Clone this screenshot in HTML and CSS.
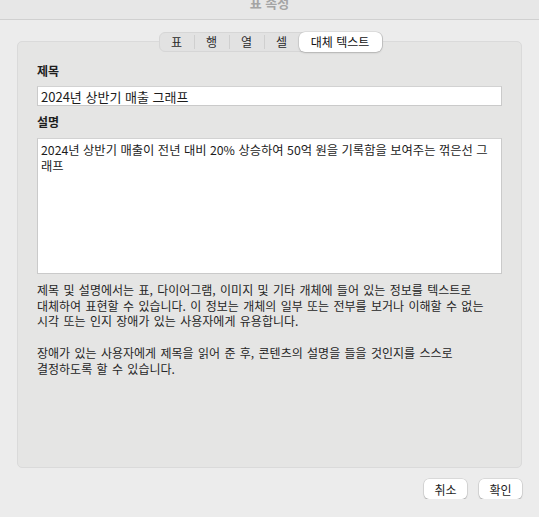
FILE: index.html
```html
<!DOCTYPE html>
<html lang="ko">
<head>
  <meta charset="utf-8">
  <title>표 속성</title>
  <link rel="stylesheet" href="styles.css">
</head>
<body>
  <div class="titlebar"><span class="title">표 속성</span></div>

  <div class="tabs-row">
    <div class="tabs">
      <span class="tab">표</span>
      <span class="tab">행</span>
      <span class="tab">열</span>
      <span class="tab">셀</span>
      <span class="tab active">대체 텍스트</span>
    </div>
  </div>

  <div class="panel">
    <label class="field-label" for="altTitle">제목</label>
    <input type="text" id="altTitle" class="field" value="2024년 상반기 매출 그래프">

    <label class="field-label second" for="altDesc">설명</label>
    <textarea id="altDesc" class="field area">2024년 상반기 매출이 전년 대비 20% 상승하여 50억 원을 기록함을 보여주는 꺾은선 그래프</textarea>

    <div class="help">
      <p>제목 및 설명에서는 표, 다이어그램, 이미지 및 기타 개체에 들어 있는 정보를 텍스트로<br>
      대체하여 표현할 수 있습니다. 이 정보는 개체의 일부 또는 전부를 보거나 이해할 수 없는<br>
      시각 또는 인지 장애가 있는 사용자에게 유용합니다.</p>
      <p>장애가 있는 사용자에게 제목을 읽어 준 후, 콘텐츠의 설명을 들을 것인지를 스스로<br>
      결정하도록 할 수 있습니다.</p>
    </div>
  </div>

  <div class="actions">
    <button class="btn">취소</button>
    <button class="btn">확인</button>
  </div>
</body>
</html>
```

FILE: styles.css
```css
body {
  margin: 0;
  background: #ececec;
  font-family: "Noto Sans CJK KR", sans-serif;
  color: #222;
  overflow: hidden;
}
.titlebar {
  height: 19px;
  background: #e7e7e7;
  border-bottom: 1px solid #d0d0d0;
  text-align: center;
}
.title {
  display: block;
  font-size: 13px;
  font-weight: 600;
  line-height: 6px;
  color: #a4a4a4;
}
.tabs-row {
  display: flex;
  justify-content: center;
  margin-top: 12px;
  margin-bottom: -11px;
  position: relative;
  z-index: 1;
}
.tabs {
  display: flex;
  align-items: center;
  height: 20px;
  margin-left: 2px;
  background: #e2e2e2;
  border: 1px solid #d6d6d6;
  border-radius: 6px;
  box-sizing: border-box;
}
.tab {
  width: 34px;
  text-align: center;
  font-size: 12px;
  line-height: 14px;
  color: #2a2a2a;
  border-left: 1px solid #cfcfcf;
}
.tab:first-child {
  border-left: none;
}
.tab.active {
  width: 83px;
  height: 20px;
  line-height: 20px;
  background: #fff;
  border-left: none;
  border-radius: 6px;
  box-shadow: 0 0 0 0.5px rgba(0,0,0,0.12), 0 1px 2px rgba(0,0,0,0.18);
  color: #111;
}
.panel {
  margin: 0 17px;
  height: 427px;
  box-sizing: border-box;
  padding: 21px 19px 0;
  background: #e5e5e4;
  border: 1px solid #dadada;
  border-radius: 5px;
  display: flex;
  flex-direction: column;
}
.field-label {
  font-size: 12px;
  font-weight: 700;
  line-height: 16px;
  color: #1e1e1e;
}
.field-label.second {
  margin-top: 8px;
}
.field {
  margin-top: 7px;
  box-sizing: border-box;
  width: 100%;
  background: #fff;
  border: 1px solid #cacaca;
  border-top-color: #d2d2d2;
  font-family: "Noto Sans CJK KR", sans-serif;
  font-size: 13px;
  color: #1c1c1c;
  outline: none;
}
input.field {
  height: 20px;
  padding: 0 3px;
  line-height: 18px;
}
.area {
  margin-top: 8px;
  height: 136px;
  padding: 3px 3px;
  font-size: 12.3px;
  line-height: 16px;
  word-break: break-all;
  resize: none;
}
.help {
  margin-top: 8px;
  font-size: 12px;
  line-height: 15.7px;
  word-spacing: 1px;
  color: #262626;
  white-space: nowrap;
}
.help p {
  margin: 0 0 15.7px;
}
.actions {
  display: flex;
  justify-content: flex-end;
  gap: 12px;
  padding: 11px 17px 0;
}
.btn {
  width: 43px;
  height: 20px;
  padding: 0;
  background: #fff;
  border: none;
  border-radius: 5px;
  box-shadow: 0 0 0 0.5px rgba(0,0,0,0.15), 0 1px 1.5px rgba(0,0,0,0.2);
  font-family: "Noto Sans CJK KR", sans-serif;
  font-size: 12px;
  color: #1e1e1e;
  cursor: pointer;
}
```
